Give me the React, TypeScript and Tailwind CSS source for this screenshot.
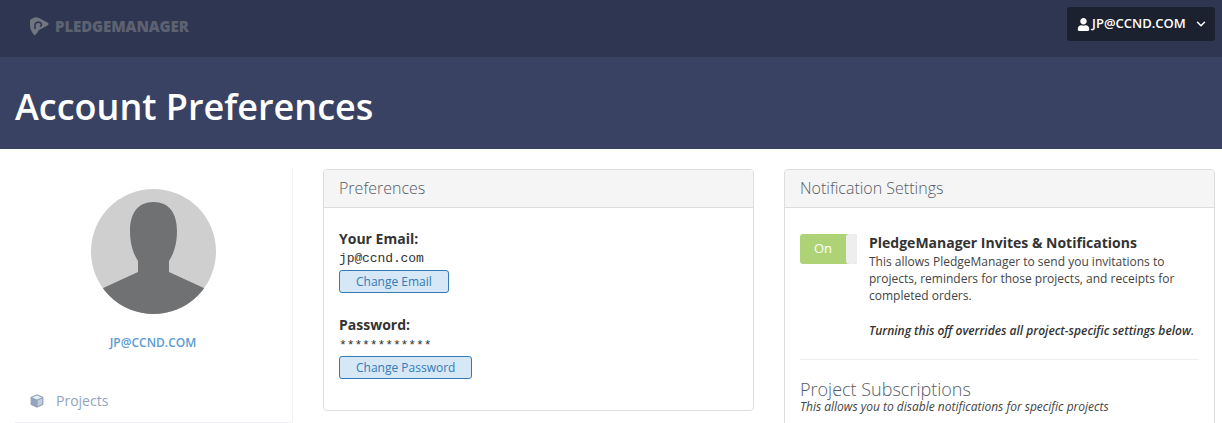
import React from 'react'
import { ChevronDown } from 'lucide-react'
import { FaUser } from 'react-icons/fa'

const sans = { fontFamily: '"Open Sans", sans-serif' }
const mono = { fontFamily: '"Liberation Mono", monospace' }

function Logo() {
  return (
    <div className="mt-[9px] flex items-center gap-[5px]">
      <svg width="20" height="21" viewBox="0 0 20 21">
        <path d="M3.3 2 C5 1 7 1 9 2 L17.5 6.5 C19 7.5 19 8.5 17.5 9.5 L9 14 C8 16 6.5 18 4.5 19.5 C2 17 0 13 0 9 L0 5 C0 3.5 1.5 2.5 3.3 2 Z" fill="#717580" />
        <path d="M5 13 L5 9 C5 6.5 8 5.5 10 6.5 C12 7.5 12 9.5 10 10.5" fill="none" stroke="#2f3652" strokeWidth="1.6" />
      </svg>
      <span className="text-[15px] leading-none font-extrabold text-[#5c6271] tracking-[-0.1px]">PLEDGEMANAGER</span>
    </div>
  )
}

function Avatar() {
  return (
    <svg width="125" height="125" viewBox="0 0 125 125">
      <defs>
        <clipPath id="round">
          <circle cx="62.5" cy="62.5" r="62.5" />
        </clipPath>
      </defs>
      <circle cx="62.5" cy="62.5" r="62.5" fill="#cfcfcf" />
      <path
        clipPath="url(#round)"
        d="M62.5 13 C78 13 86 24 86 42 C86 56 82 66 78 72 L78 83 L115 100 L115 125 L10 125 L10 100 L47 83 L47 72 C43 66 39 56 39 42 C39 24 47 13 62.5 13 Z"
        fill="#707172"
      />
    </svg>
  )
}

function Panel({ title, children }: { title: string; children: React.ReactNode }) {
  return (
    <section className="rounded-[4px] border border-[#dddddd] bg-white">
      <div className="h-[38px] rounded-t-[3px] border-b border-[#dddddd] bg-[#f5f5f5] px-[15px] text-[16px] leading-[37px] font-light text-[#555c66]">
        {title}
      </div>
      {children}
    </section>
  )
}

function OutlineButton({ children }: { children: React.ReactNode }) {
  return (
    <button className="block h-[23px] rounded-[3px] border border-[#337ab7] bg-[#d6e7f5] px-4 text-[12px] leading-[21px] text-[#337ab7]">
      {children}
    </button>
  )
}

export default function App(): React.JSX.Element {
  return (
    <div className="h-[423px] overflow-hidden bg-white text-[#333333]" style={sans}>
      <header className="flex h-[57px] items-start justify-between bg-[#2f3652] pt-[7px] pr-[7px] pl-[30px]">
        <Logo />
        <button className="flex h-[34px] w-[148px] items-center rounded-[3px] bg-[#1c2130] pl-[10px] text-[13px] font-semibold text-white">
          <FaUser className="mr-[2px] h-[13px] w-[13px]" />
          JP@CCND.COM
          <ChevronDown className="ml-[8px] h-[14px] w-[14px]" strokeWidth={2.5} />
        </button>
      </header>

      <div className="h-[92px] bg-[#3a4263] px-[15px] pt-[27px] text-[36px] leading-[46px] font-semibold text-white">
        Account Preferences
      </div>

      <main className="grid grid-cols-[278px_431px_431px] gap-x-[30px] px-[15px] pt-5">
        <aside className="h-[254px] border-r border-[#f0f2f5]">
          <div className="flex flex-col items-center pt-5 pr-[1px]">
            <Avatar />
            <a className="mt-[20px] text-[12px] leading-[17px] font-semibold text-[#5b9bd5]" href="#">
              JP@CCND.COM
            </a>
          </div>
          <div className="mt-[30px] flex h-[42px] items-center border-b border-[#f0f2f5] pb-[2px] pl-[15px] text-[14px] text-[#93a3bd]">
            <svg width="14" height="14" viewBox="0 0 14 14" className="mr-[12px]">
              <path d="M7 0.3 L13.4 3 L13.4 10.8 L7 13.8 L0.6 10.8 L0.6 3 Z" fill="#93a3bd" />
              <path d="M7 1.6 L11.8 3.4 L7 5.4 L2.2 3.4 Z" fill="#e8edf3" />
              <path d="M12.2 4.4 L12.2 10 L7.7 12.2 L7.7 6.4 Z" fill="#c3cedd" />
            </svg>
            Projects
          </div>
        </aside>

        <div>
          <Panel title="Preferences">
            <div className="h-[202px] px-[15px] pt-[21px]">
              <p className="text-[14px] leading-[20px] font-bold">Your Email:</p>
              <p className="mt-[1px] text-[13px] leading-[18px] tracking-[-0.1px]" style={mono}>
                jp@ccnd.com
              </p>
              <div className="mt-[2px]">
                <OutlineButton>Change Email</OutlineButton>
              </div>
              <p className="mt-[22px] text-[14px] leading-[20px] font-bold">Password:</p>
              <p className="mt-[2px] text-[13px] leading-[18px] tracking-[-0.1px]" style={mono}>
                ************
              </p>
              <div className="mt-[1px]">
                <OutlineButton>Change Password</OutlineButton>
              </div>
            </div>
          </Panel>
        </div>

        <div>
          <Panel title="Notification Settings">
            <div className="h-[300px] px-[15px] pt-[26px]">
              <div className="flex border-b border-[#eeeeee] pb-[20px]">
                <div className="flex h-[30px] w-[57px] shrink-0 rounded-[3px] bg-[#aed377]">
                  <div className="w-[46px] text-center text-[13px] leading-[28px] text-white">On</div>
                  <div className="w-[11px] rounded-[3px] bg-[#eeeeee]" />
                </div>
                <div className="-mt-[1px] ml-[12px] text-[12px] leading-[17px] text-[#444444]">
                  <p className="text-[14px] leading-[20px] font-bold text-[#333333]">PledgeManager Invites &amp; Notifications</p>
                  <p>
                    This allows PledgeManager to send you invitations to
                    <br />
                    projects, reminders for those projects, and receipts for
                    <br />
                    completed orders.
                  </p>
                  <p className="mt-[18px] font-semibold text-[#333333] italic">Turning this off overrides all project-specific settings below.</p>
                </div>
              </div>
              <h2 className="mt-[17px] text-[18px] leading-[24px] font-light text-[#555c66]">Project Subscriptions</h2>
              <p className="text-[12px] leading-[11px] text-[#444444] italic">This allows you to disable notifications for specific projects</p>
            </div>
          </Panel>
        </div>
      </main>
    </div>
  )
}
